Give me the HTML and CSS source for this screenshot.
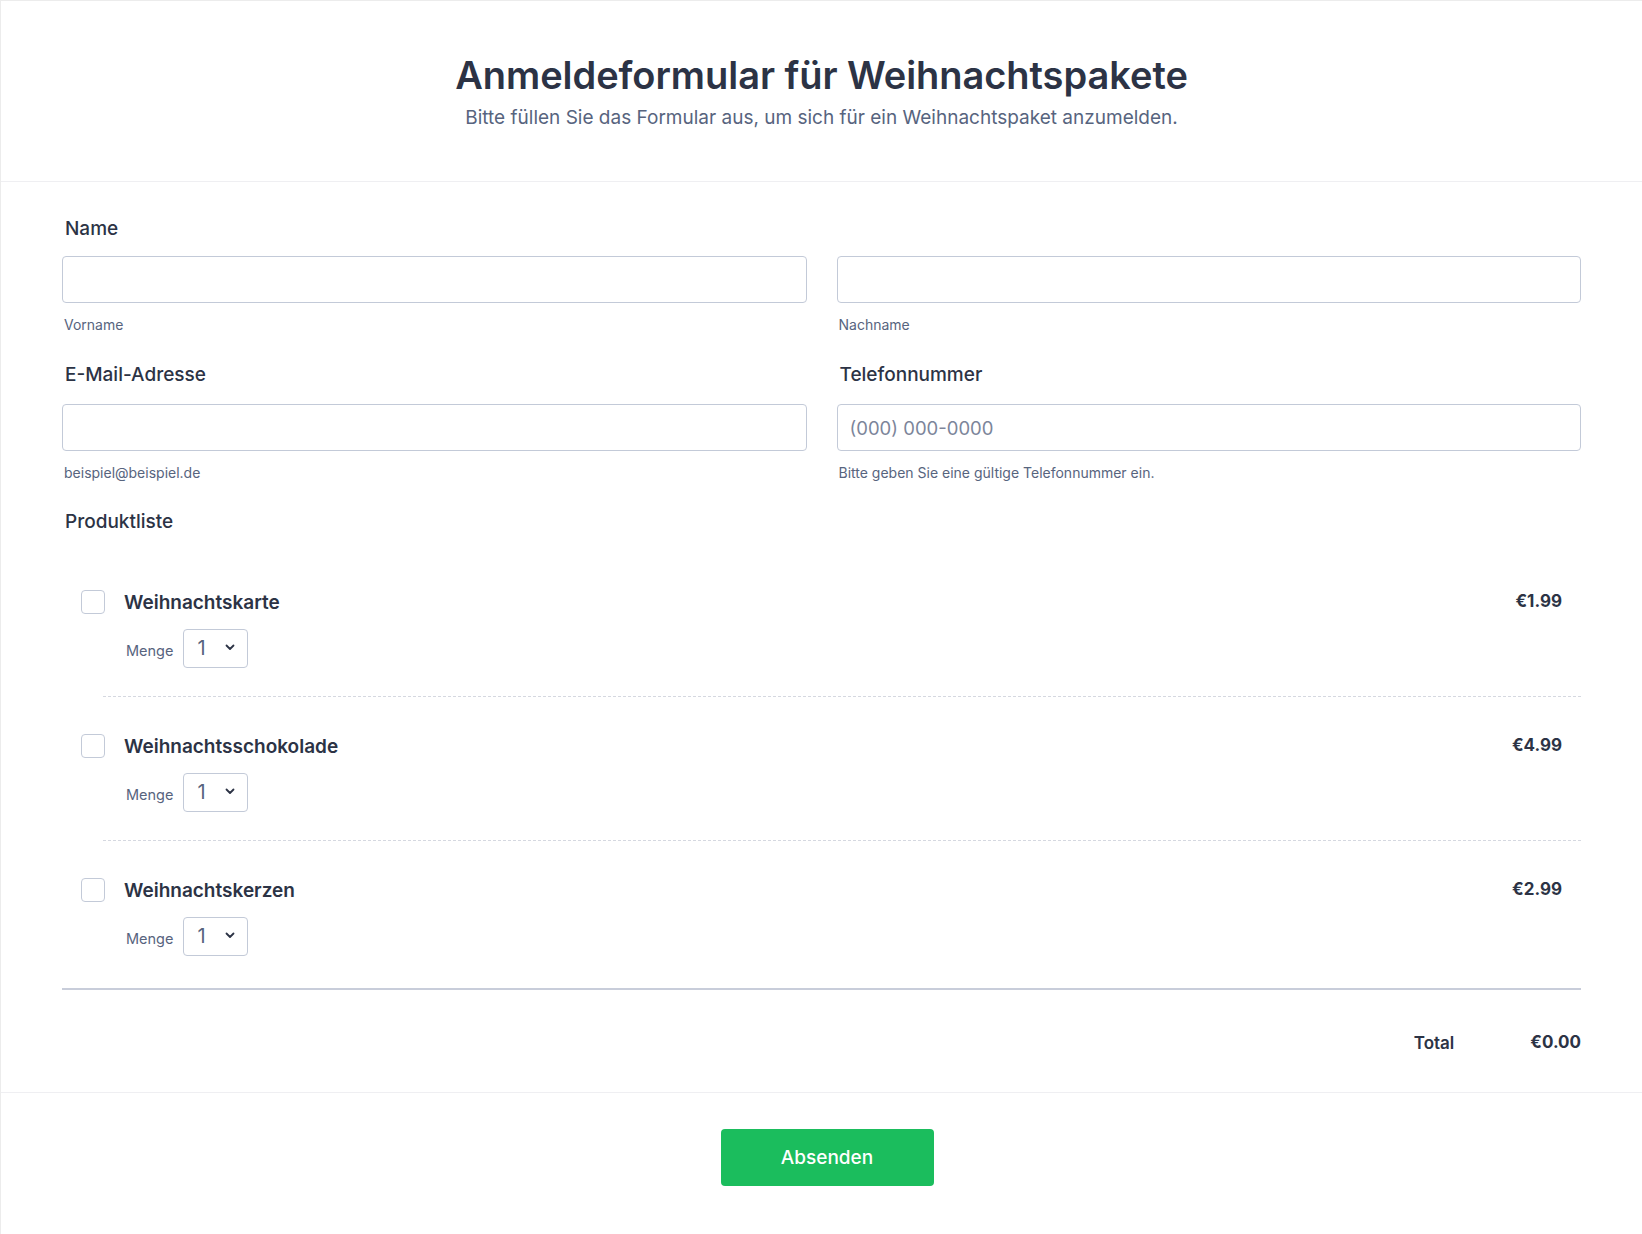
FILE: index.html
```html
<!DOCTYPE html>
<html lang="de">
<head>
<meta charset="utf-8">
<title>Anmeldeformular für Weihnachtspakete</title>
<link rel="stylesheet" href="styles.css">
</head>
<body>
<div class="page">
  <header class="header">
    <h1 class="title">Anmeldeformular für Weihnachtspakete</h1>
    <p class="subtitle">Bitte füllen Sie das Formular aus, um sich für ein Weihnachtspaket anzumelden.</p>
  </header>

  <main class="form">
    <div class="field">
      <div class="label">Name</div>
      <div class="two-col">
        <div class="col">
          <input class="input" type="text">
          <div class="sublabel">Vorname</div>
        </div>
        <div class="col">
          <input class="input" type="text">
          <div class="sublabel">Nachname</div>
        </div>
      </div>
    </div>

    <div class="two-col field-row">
      <div class="col">
        <div class="label">E-Mail-Adresse</div>
        <input class="input" type="email">
        <div class="sublabel">beispiel@beispiel.de</div>
      </div>
      <div class="col">
        <div class="label">Telefonnummer</div>
        <input class="input" type="tel" placeholder="(000) 000-0000">
        <div class="sublabel">Bitte geben Sie eine gültige Telefonnummer ein.</div>
      </div>
    </div>

    <div class="label products-label">Produktliste</div>

    <div class="products">
      <div class="product">
        <div class="product-head">
          <span class="checkbox"></span>
          <span class="product-name">Weihnachtskarte</span>
          <span class="price">€1.99</span>
        </div>
        <div class="qty">
          <span class="qty-label">Menge</span>
          <span class="select"><span class="select-val">1</span><svg class="chev" width="10" height="7" viewBox="0 0 10 7"><path d="M1.5 1.5 L5 5 L8.5 1.5" fill="none" stroke="#2c3345" stroke-width="1.8" stroke-linecap="round" stroke-linejoin="round"/></svg></span>
        </div>
      </div>
      <div class="sep"></div>
      <div class="product">
        <div class="product-head">
          <span class="checkbox"></span>
          <span class="product-name">Weihnachtsschokolade</span>
          <span class="price">€4.99</span>
        </div>
        <div class="qty">
          <span class="qty-label">Menge</span>
          <span class="select"><span class="select-val">1</span><svg class="chev" width="10" height="7" viewBox="0 0 10 7"><path d="M1.5 1.5 L5 5 L8.5 1.5" fill="none" stroke="#2c3345" stroke-width="1.8" stroke-linecap="round" stroke-linejoin="round"/></svg></span>
        </div>
      </div>
      <div class="sep"></div>
      <div class="product">
        <div class="product-head">
          <span class="checkbox"></span>
          <span class="product-name">Weihnachtskerzen</span>
          <span class="price">€2.99</span>
        </div>
        <div class="qty">
          <span class="qty-label">Menge</span>
          <span class="select"><span class="select-val">1</span><svg class="chev" width="10" height="7" viewBox="0 0 10 7"><path d="M1.5 1.5 L5 5 L8.5 1.5" fill="none" stroke="#2c3345" stroke-width="1.8" stroke-linecap="round" stroke-linejoin="round"/></svg></span>
        </div>
      </div>
    </div>

    <div class="total">
      <span class="total-label">Total</span>
      <span class="total-val">€0.00</span>
    </div>
  </main>

  <footer class="footer">
    <button class="submit" type="button">Absenden</button>
  </footer>
</div>
</body>
</html>
```

FILE: styles.css
```css
* { box-sizing: border-box; }
html, body { margin: 0; padding: 0; background: #fff; }
body {
  font-family: Inter, "Noto Sans", "Liberation Sans", sans-serif;
  color: #2c3345;
}
.page {
  min-height: 1234px;
  border-left: 1px solid #ececec;
  border-top: 1px solid #ececec;
}
.header {
  padding: 51px 0 51px;
  border-bottom: 1px solid #efeff2;
  text-align: center;
}
.title {
  margin: 0;
  font-size: 38px;
  line-height: 46px;
  font-weight: 600;
  color: #2c3345;
  letter-spacing: -0.05px;
}
.subtitle {
  margin: 8px 0 0;
  font-size: 19px;
  line-height: 24px;
  color: #57647e;
}
.form {
  padding: 35px 61px 37px 61px;
}
.label {
  font-size: 19px;
  line-height: 24px;
  font-weight: 500;
  color: #2c3345;
  padding-left: 3px;
}
.two-col {
  display: grid;
  grid-template-columns: 1fr 1fr;
  column-gap: 30px;
  margin-top: 15px;
}
.field-row { margin-top: 29px; }
.field-row .input { margin-top: 17px; }
.input {
  display: block;
  width: 100%;
  height: 47px;
  border: 1px solid #c3cad8;
  border-radius: 4px;
  background: #fff;
  padding: 0 12px;
  font-family: inherit;
  font-size: 18.5px;
  color: #2c3345;
  outline: none;
}
.input::placeholder { color: #7c859a; }
.sublabel {
  margin-top: 13px;
  font-size: 14px;
  line-height: 18px;
  color: #57647e;
  padding-left: 2px;
}
.products-label { margin-top: 28px; }
.products {
  margin-top: 56px;
  padding: 0 19px 0 19px;
}
.product-head {
  display: flex;
  align-items: center;
  height: 24px;
}
.checkbox {
  width: 24px;
  height: 24px;
  border: 1px solid #c3cad8;
  border-radius: 4px;
  background: #fff;
  flex: none;
}
.product-name {
  margin-left: 19px;
  font-size: 19px;
  font-weight: 600;
  color: #2c3345;
  flex: 1;
}
.price {
  font-size: 17px;
  font-weight: 700;
  color: #2c3345;
  margin-top: -2px;
}
.qty {
  display: flex;
  align-items: center;
  margin-top: 15px;
  margin-left: 45px;
}
.qty-label {
  font-size: 14.5px;
  color: #57647e;
  margin-top: 4px;
}
.select {
  margin-left: 10px;
  width: 65px;
  height: 39px;
  border: 1px solid #c3cad8;
  border-radius: 4px;
  display: flex;
  align-items: center;
  justify-content: space-between;
  padding: 0 12px 0 13px;
}
.select-val {
  font-size: 20px;
  color: #57647e;
  margin-top: -2px;
}
.chev { margin-top: -2px; }
.sep {
  margin: 28px -19px 37px 22px;
  border-top: 1px dashed #d5d8e0;
}
.total {
  margin-top: 32px;
  border-top: 2px solid #c8cdda;
  padding-top: 38px;
  display: flex;
  justify-content: flex-end;
  align-items: center;
  gap: 76px;
  line-height: 24px;
}
.total-label {
  font-size: 17px;
  font-weight: 600;
  color: #2c3345;
  margin-top: 3px;
}
.total-val {
  font-size: 17px;
  font-weight: 700;
  color: #2c3345;
}
.footer {
  border-top: 1px solid #efeff2;
  padding-top: 36px;
  text-align: center;
}
.submit {
  width: 213px;
  height: 57px;
  border: none;
  border-radius: 4px;
  background: #1bbd5d;
  color: #fff;
  font-family: inherit;
  font-size: 19px;
  font-weight: 500;
  margin-left: 11px;
}
```
